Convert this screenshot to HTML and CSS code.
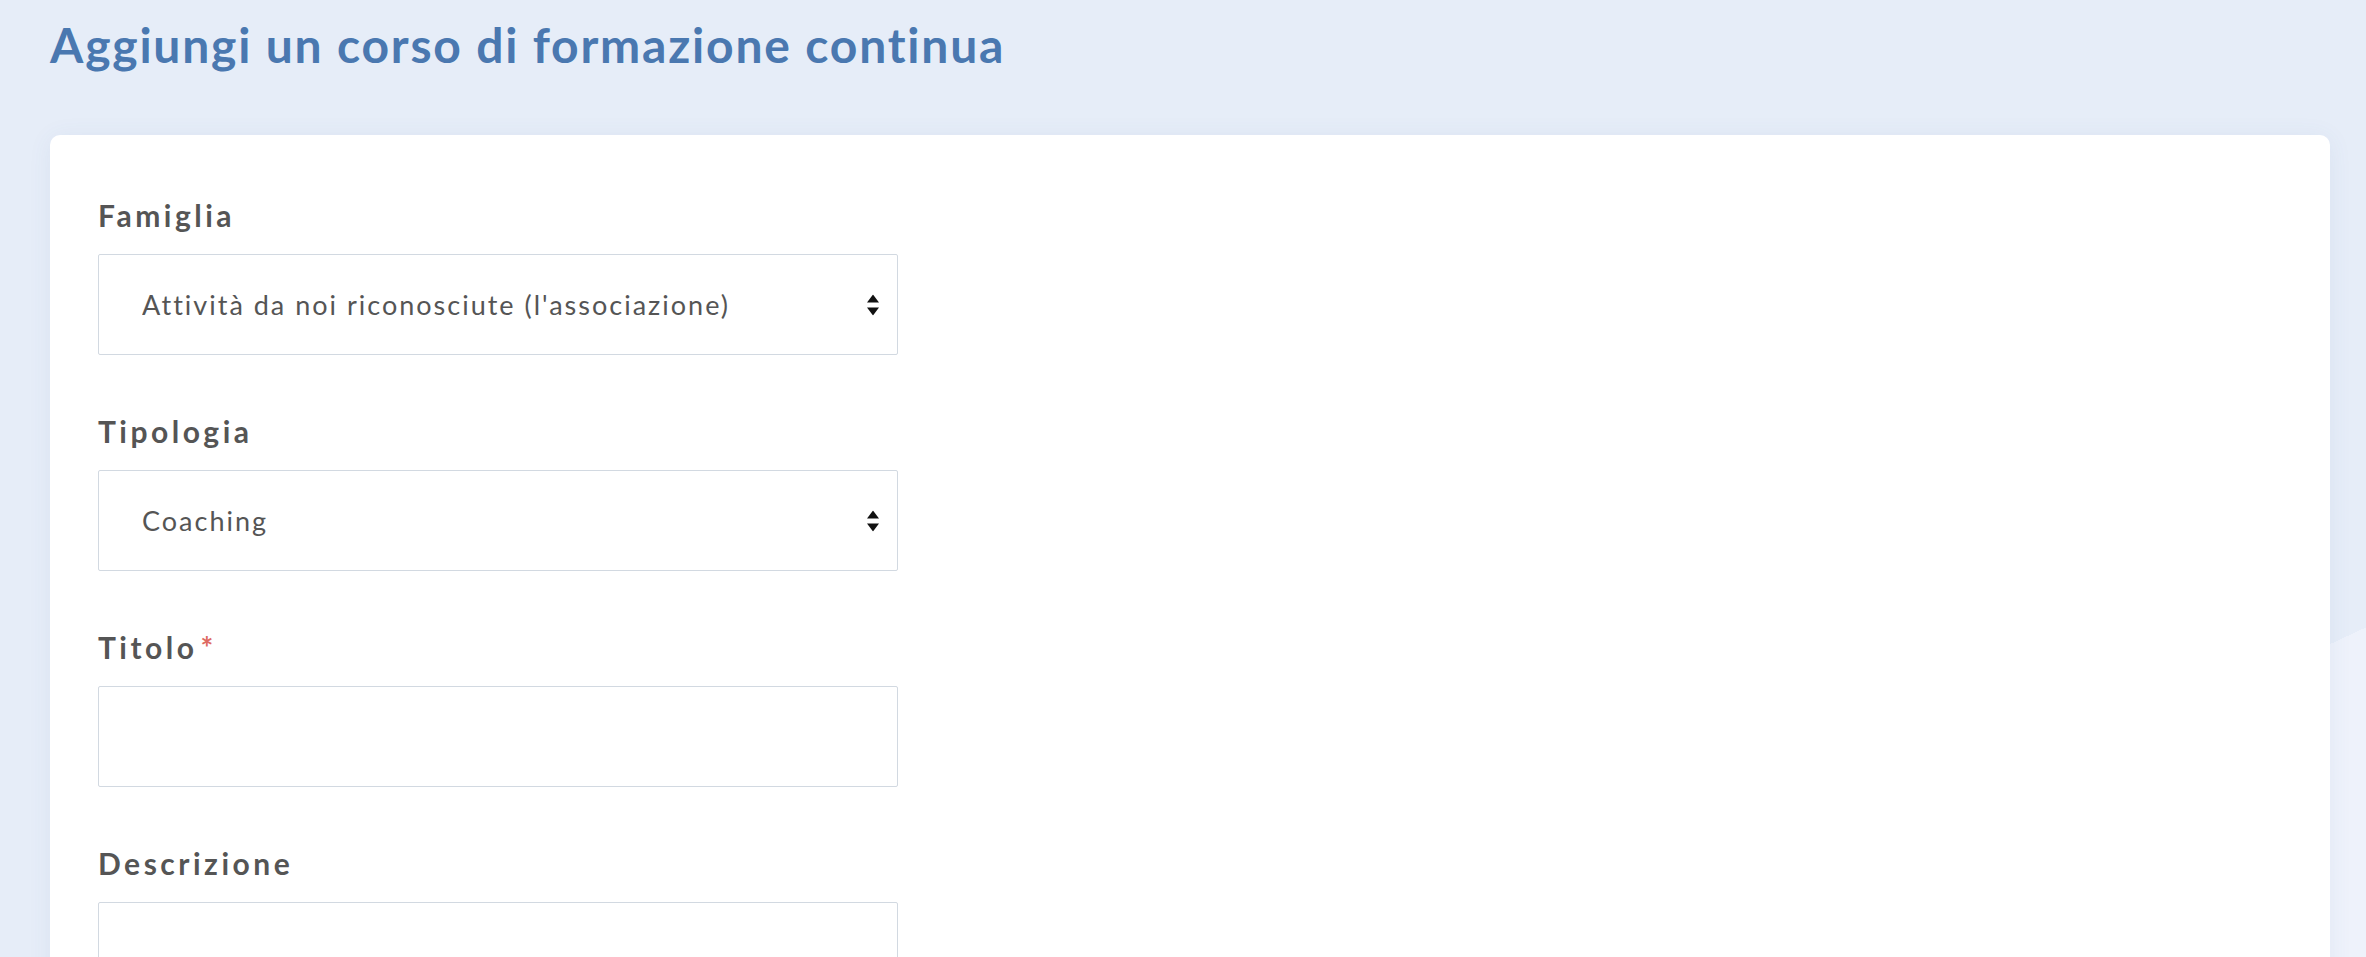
FILE: index.html
```html
<!DOCTYPE html>
<html lang="it">
<head>
  <meta charset="UTF-8" />
  <meta name="viewport" content="width=device-width, initial-scale=1.0"/>
  <title>Aggiungi un corso di formazione continua</title>
  <link rel="stylesheet" href="styles.css">
</head>
<body>

  <div class="page">
    <h1 class="page-title">Aggiungi un corso di formazione continua</h1>

    <div class="card">
      <form class="course-form">

        <div class="field">
          <label class="field-label" for="famiglia">Famiglia</label>
          <div class="select-wrap">
            <select id="famiglia" class="field-control">
              <option>Attività da noi riconosciute (l'associazione)</option>
            </select>
            <svg class="select-arrows" viewBox="0 0 12 21" aria-hidden="true">
              <polygon points="6,0 12,8 0,8" />
              <polygon points="0,13 12,13 6,21" />
            </svg>
          </div>
        </div>

        <div class="field">
          <label class="field-label" for="tipologia">Tipologia</label>
          <div class="select-wrap">
            <select id="tipologia" class="field-control">
              <option>Coaching</option>
            </select>
            <svg class="select-arrows" viewBox="0 0 12 21" aria-hidden="true">
              <polygon points="6,0 12,8 0,8" />
              <polygon points="0,13 12,13 6,21" />
            </svg>
          </div>
        </div>

        <div class="field">
          <label class="field-label" for="titolo">Titolo<span class="required">*</span></label>
          <input type="text" id="titolo" class="field-control" />
        </div>

        <div class="field">
          <label class="field-label" for="descrizione">Descrizione</label>
          <textarea id="descrizione" class="field-control field-textarea"></textarea>
        </div>

      </form>
    </div>
  </div>

</body>
</html>
```

FILE: styles.css
```css
* {
  margin: 0;
  padding: 0;
  box-sizing: border-box;
}

body {
  font-family: Lato, "Liberation Sans", sans-serif;
}

.page {
  height: 100vh;
  overflow: hidden;
  padding: 16px 36px 0 50px;
  background: linear-gradient(155deg, #e6edf8 84%, #eef2fb 84%);
}

.page-title {
  font-size: 48px;
  line-height: 58px;
  font-weight: 700;
  letter-spacing: 1.8px;
  color: #4a78b0;
  margin-bottom: 61px;
}

.card {
  background: #fff;
  border-radius: 10px;
  padding: 58px 48px;
  box-shadow: 0 2px 24px rgba(70, 100, 160, 0.07);
}

.field {
  margin-bottom: 54px;
}

.field-label {
  display: block;
  font-size: 30px;
  line-height: 45px;
  font-weight: 700;
  letter-spacing: 3.5px;
  color: #555;
  margin-bottom: 16px;
}

.required {
  color: #de6a62;
  margin-left: 3px;
}

.select-wrap {
  position: relative;
  width: 800px;
}

.field-control {
  display: block;
  width: 800px;
  height: 101px;
  padding: 0 60px 0 43px;
  border: 1px solid #d2d9e1;
  border-radius: 2px;
  background: #fff;
  font-family: Lato, "Liberation Sans", sans-serif;
  font-size: 27px;
  letter-spacing: 2px;
  color: #555;
  outline: none;
  appearance: none;
  -webkit-appearance: none;
}

.field-textarea {
  height: 200px;
  resize: none;
}

.select-arrows {
  position: absolute;
  right: 19px;
  top: 50%;
  transform: translateY(-50%);
  width: 12px;
  height: 21px;
  fill: #111;
  pointer-events: none;
}
```
